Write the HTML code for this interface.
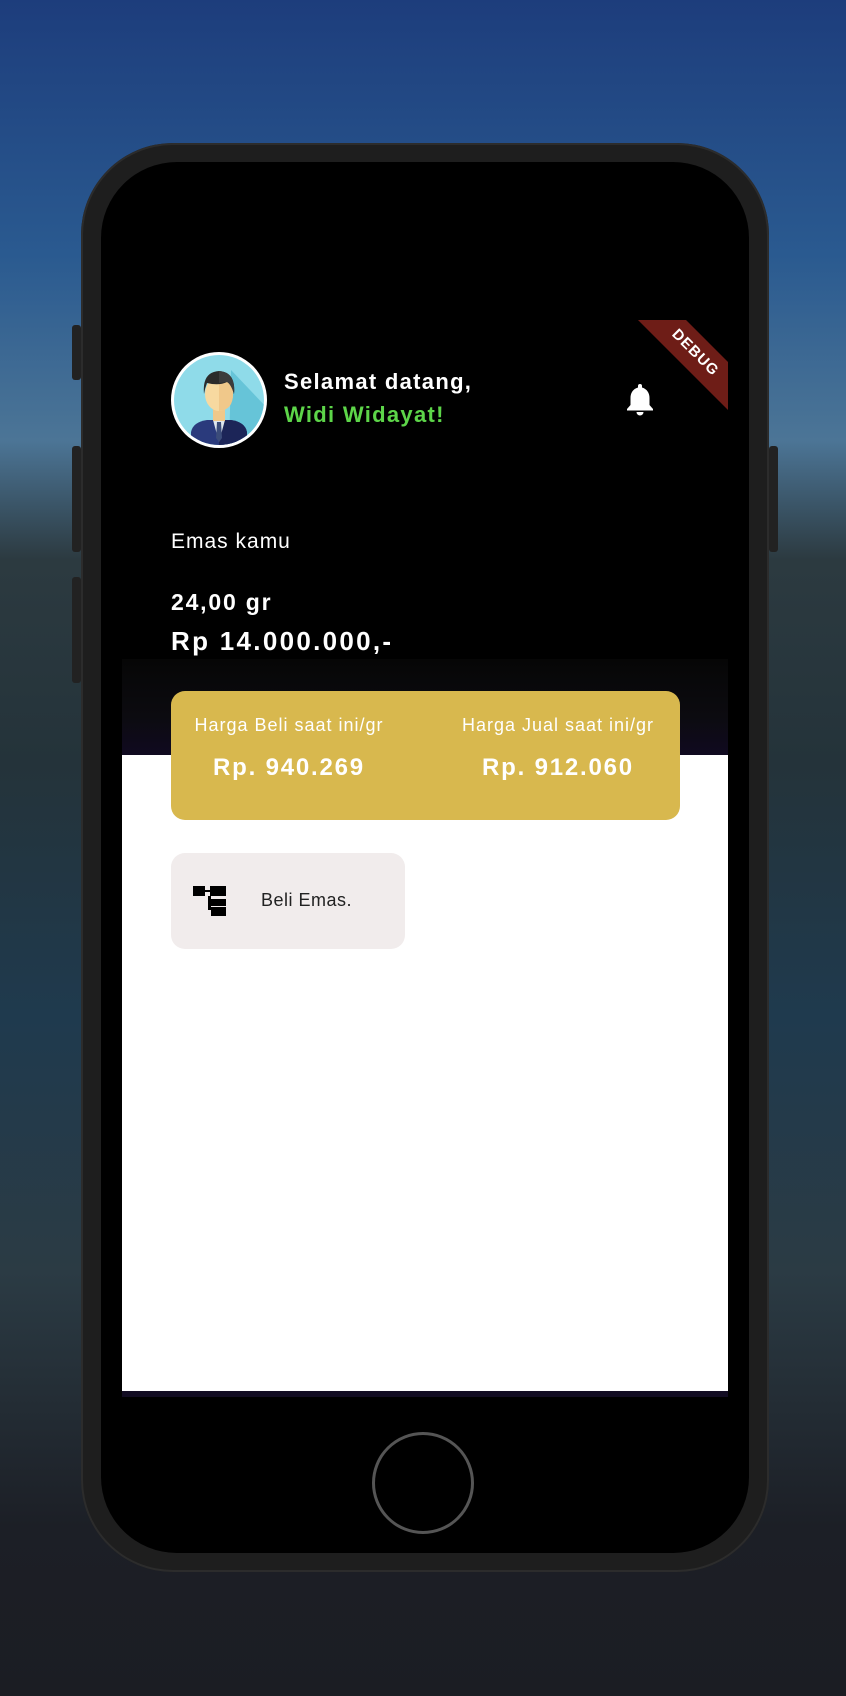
<!DOCTYPE html>
<html><head><meta charset="utf-8"><style>
html,body{margin:0;padding:0}
body{width:846px;height:1696px;position:relative;overflow:hidden;font-family:"Liberation Sans",sans-serif;
background:linear-gradient(180deg,#1d3d7c 0%,#2a5a90 15%,#4c7596 26%,#2c3a40 33%,#24333a 45%,#1f3a4e 60%,#2b3b44 75%,#1c1f26 90%,#1b1d23 100%);}
.phone{position:absolute;left:81px;top:143px;width:688px;height:1429px;border-radius:92px;background:#1e1e1e;box-shadow:0 0 0 2px #2c2c2c inset;}
.btn{position:absolute;background:#222;border-radius:3px}
.screen{position:absolute;left:101px;top:162px;width:648px;height:1391px;border-radius:76px;background:#000;overflow:hidden}
.app{position:absolute;left:21px;width:606px}
.t{position:absolute;color:#fff;white-space:nowrap}
</style></head><body>
<div class="btn" style="left:72px;top:325px;width:9px;height:55px"></div>
<div class="btn" style="left:72px;top:446px;width:9px;height:106px"></div>
<div class="btn" style="left:72px;top:577px;width:9px;height:106px"></div>
<div class="btn" style="left:769px;top:446px;width:9px;height:106px"></div>
<div class="phone"></div>
<div class="screen">
  <div class="app" style="top:328px;height:169px;background:#000"></div>
  <div class="app" style="top:497px;height:162px;background:#070707"></div>
</div>
<div class="app" style="left:122px;top:659px;width:606px;height:96px;background:linear-gradient(180deg,#060606 0%,#0c0b10 60%,#100a20 100%)"></div>
<div class="app" style="left:122px;top:755px;width:606px;height:636px;background:#fff"></div>
<div class="app" style="left:122px;top:1391px;width:606px;height:6px;background:#120c22"></div>

<!-- avatar -->
<svg style="position:absolute;left:169px;top:350px" width="100" height="100" viewBox="0 0 100 100">
<defs><clipPath id="c"><circle cx="50" cy="50" r="45"/></clipPath></defs>
<circle cx="50" cy="50" r="48" fill="#fff"/>
<circle cx="50" cy="50" r="45" fill="#8fdbe9"/>
<g clip-path="url(#c)">
<path d="M62 20 L100 60 L100 100 L60 100 Z" fill="#66c4d8"/>
<path d="M22 100 L22 82 Q24 72 38 70 L62 70 Q76 72 78 82 L78 100Z" fill="#2a3a7c"/>
<path d="M50 70 L62 70 Q76 72 78 82 L78 100 L50 100Z" fill="#1c2558"/>
<path d="M44 70 L56 70 L50 92Z" fill="#dfe7ee"/>
<path d="M48 72 L52 72 L53 88 L50 92 L47 88Z" fill="#3b4c7a"/>
<rect x="44" y="58" width="12" height="13" fill="#f0c88a"/>
<ellipse cx="50" cy="44" rx="14" ry="17" fill="#f7d9a0"/>
<path d="M50 27 Q64 27 64 44 Q64 60 50 61Z" fill="#f0c88a"/>
<path d="M35 44 Q33 22 50 21 Q67 22 65 44 Q62 34 58 32 Q50 36 38 33 Q36 38 35 44Z" fill="#2b2b2b"/>
<path d="M50 21 Q67 22 65 44 Q62 34 58 32 L50 33Z" fill="#3c3c3c"/>
</g></svg>
<div class="t" style="left:284px;top:369px;font-size:22px;font-weight:bold;letter-spacing:1.3px">Selamat datang,</div>
<div class="t" style="left:284px;top:402px;font-size:22px;font-weight:bold;letter-spacing:1.3px;color:#5dd549">Widi Widayat!</div>
<!-- bell -->
<svg style="position:absolute;left:625px;top:382px" width="30" height="34" viewBox="0 0 30 34">
<path d="M15 2 a2 2 0 0 1 2 2 v1.5 C22 7 24.5 11 24.5 16 V23 L28 27 V28.5 H2 V27 L5.5 23 V16 C5.5 11 8 7 13 5.5 V4 a2 2 0 0 1 2-2Z" fill="#fff"/>
<path d="M11.5 30 h7 a3.5 3.5 0 0 1 -7 0Z" fill="#fff"/>
</svg>
<!-- debug banner -->
<div style="position:absolute;left:600px;top:320px;width:128px;height:120px;overflow:hidden">
<div style="position:absolute;left:-5px;top:16px;width:200px;height:34px;background:#6e1d17;transform:rotate(45deg);color:#fff;font-size:15px;font-weight:bold;text-align:center;line-height:34px;letter-spacing:1px">DEBUG</div>
</div>
<div class="t" style="left:171px;top:530px;font-size:21px;letter-spacing:1px">Emas kamu</div>
<div class="t" style="left:171px;top:589px;font-size:23px;font-weight:bold;letter-spacing:1.8px">24,00 gr</div>
<div class="t" style="left:171px;top:626px;font-size:26px;font-weight:bold;letter-spacing:2.3px">Rp 14.000.000,-</div>
<!-- gold card -->
<div style="position:absolute;left:171px;top:691px;width:509px;height:129px;border-radius:14px;background:#d8b84e"></div>
<div class="t" style="left:171px;width:236px;text-align:center;top:715px;font-size:18px;letter-spacing:1px">Harga Beli saat ini/gr</div>
<div class="t" style="left:440px;width:236px;text-align:center;top:715px;font-size:18px;letter-spacing:1px">Harga Jual saat ini/gr</div>
<div class="t" style="left:171px;width:236px;text-align:center;top:754px;font-size:24px;font-weight:bold;letter-spacing:1.8px">Rp. 940.269</div>
<div class="t" style="left:440px;width:236px;text-align:center;top:754px;font-size:24px;font-weight:bold;letter-spacing:1.8px">Rp. 912.060</div>
<!-- beli emas -->
<div style="position:absolute;left:171px;top:853px;width:234px;height:96px;border-radius:14px;background:#f1ecec"></div>
<svg style="position:absolute;left:193px;top:886px" width="33" height="30" viewBox="0 0 33 30">
<rect x="0" y="0" width="12" height="10" fill="#000"/><rect x="12" y="4" width="5" height="2" fill="#000"/>
<rect x="17" y="0" width="16" height="10" fill="#000"/><rect x="15" y="10" width="3" height="14" fill="#000"/>
<rect x="18" y="13" width="15" height="8" fill="#000"/><rect x="18" y="21" width="15" height="9" fill="#000"/>
<rect x="18" y="20" width="15" height="1" fill="#f1ecec"/>
</svg>
<div class="t" style="left:261px;top:890px;font-size:18px;color:#222;letter-spacing:0.5px">Beli Emas.</div>
<!-- home button -->
<div style="position:absolute;left:372px;top:1432px;width:102px;height:102px;border-radius:50%;border:3px solid #555;box-sizing:border-box"></div>
</body></html>
